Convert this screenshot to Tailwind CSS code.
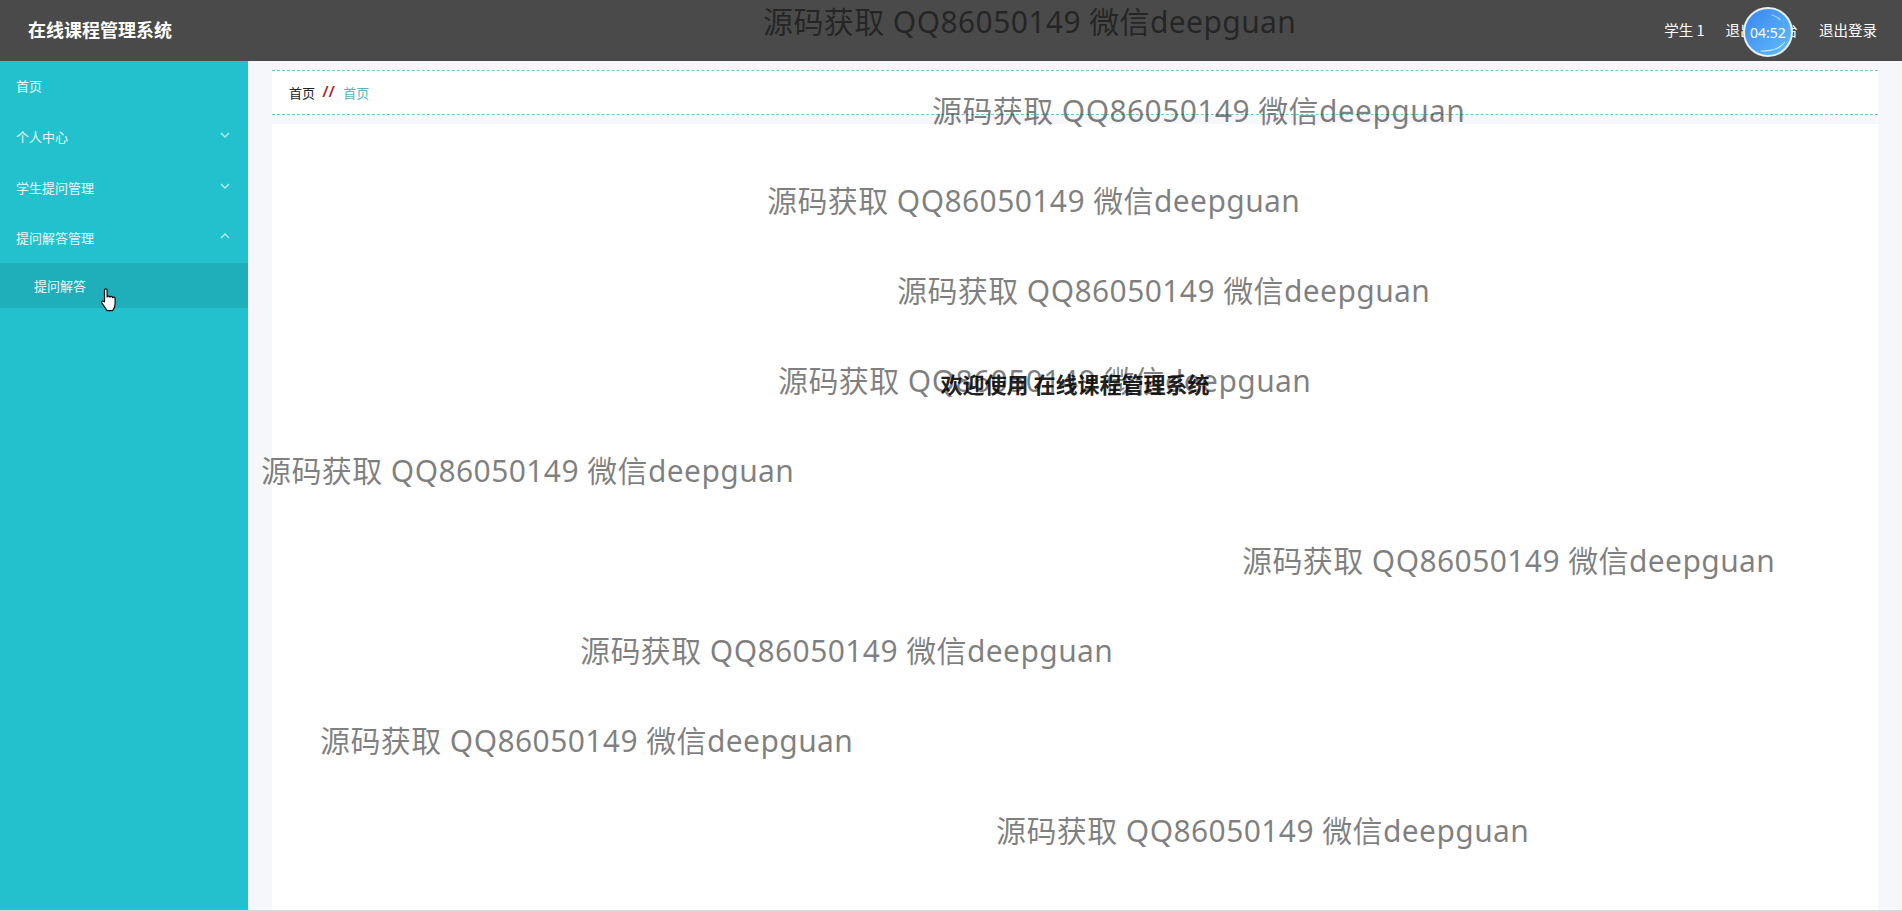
<!DOCTYPE html>
<html lang="zh-CN">
  <head>
    <meta charset="UTF-8" />
    <title>在线课程管理系统</title>
    <script src="https://cdn.jsdelivr.net/npm/@tailwindcss/browser@4"></script>
  </head>

  <body class="relative h-[912px] w-[1902px] overflow-hidden bg-[#f5f7fa] font-['Noto_Sans_CJK_SC','Noto_Sans',sans-serif]">
    <!-- top bar -->
    <header class="flex h-[61px] items-center justify-between bg-[#4a4a4a] pb-[2px] pl-[28px] pr-[25px] text-white">
      <h1 class="text-[18px] font-bold">在线课程管理系统</h1>
      <div class="flex items-center gap-[21px] text-[14.5px]">
        <span>学生 1</span>
        <span>退出到前台</span>
        <span>退出登录</span>
      </div>
    </header>

    <div class="flex h-[851px]">
      <!-- sidebar -->
      <aside class="w-[248px] shrink-0 bg-[#22c1cd] text-[13px] text-white/90">
        <div class="flex h-[50px] items-center px-4">首页</div>
        <div class="flex h-[52px] items-center justify-between px-4">
          <span>个人中心</span>
          <svg class="mb-1 mr-[1px] h-3 w-3" viewBox="0 0 12 12" fill="none" stroke="#b5f0f4" stroke-width="1.4"><path d="M2 4l4 4 4-4" /></svg>
        </div>
        <div class="flex h-[50px] items-center justify-between px-4">
          <span>学生提问管理</span>
          <svg class="mb-1 mr-[1px] h-3 w-3" viewBox="0 0 12 12" fill="none" stroke="#b5f0f4" stroke-width="1.4"><path d="M2 4l4 4 4-4" /></svg>
        </div>
        <div class="flex h-[50px] items-center justify-between px-4">
          <span>提问解答管理</span>
          <svg class="mb-1 mr-[1px] h-3 w-3" viewBox="0 0 12 12" fill="none" stroke="#b5f0f4" stroke-width="1.4"><path d="M2 8l4-4 4 4" /></svg>
        </div>
        <div class="flex h-[45px] items-center bg-[#1eafbb] pl-[34px]">提问解答</div>
      </aside>

      <!-- content -->
      <main class="flex flex-1 flex-col pl-[24px] pr-[19px] pt-[9px]">
        <nav class="flex h-[45px] items-center gap-2 border-y border-dashed border-[#7cc4ca] bg-white pl-[17px] text-[13px]">
          <span class="text-[#222]">首页</span>
          <span class="font-['Liberation_Sans',sans-serif] text-[15px] font-bold italic tracking-[2px] text-[#b0182c]">//</span>
          <span class="text-[#5ab5c0]">首页</span>
        </nav>
        <section class="mt-[9px] flex flex-1 items-start justify-center bg-white pt-[244px]">
          <h2 class="text-[22px] leading-[30px] font-bold text-[#222]">欢迎使用 在线课程管理系统</h2>
        </section>
      </main>
      <div class="w-[5px] bg-[#f6f6f6]"></div>
    </div>
    <div class="absolute bottom-0 left-0 h-[2px] w-full bg-[#d8d8d8]"></div>

    <!-- countdown bubble -->
    <div class="absolute left-[1743px] top-[7px] flex h-[50px] w-[50px] items-center justify-center overflow-hidden rounded-full border-[2px] border-[#e4f3f8] bg-gradient-to-br from-[#3a86ee] to-[#63bdfb] font-['Noto_Sans',sans-serif] text-[14px] text-white">
      <svg class="absolute inset-0 h-full w-full" viewBox="0 0 46 46" fill="none" stroke="#fff" stroke-linecap="round">
        <path d="M27 6c3 .8 5.500 2 8 4.500" stroke-opacity=".55" stroke-width="1.200" />
        <path d="M16 42c8 1 16-1 24-9-5 7-10 8-24 9z" fill="#fff" fill-opacity=".6" stroke-opacity=".5" stroke-width=".8" />
      </svg>
      <span class="relative">04:52</span>
    </div>

    <!-- watermark -->
    <div class="pointer-events-none absolute inset-0 font-['Noto_Sans','Noto_Sans_CJK_SC',sans-serif] text-[30px] leading-[40px] tracking-[0.4px] whitespace-nowrap text-black/50">
      <span class="absolute left-[763px] top-[2px]">源码获取 QQ86050149 微信deepguan</span>
      <span class="absolute left-[932px] top-[91px]">源码获取 QQ86050149 微信deepguan</span>
      <span class="absolute left-[767px] top-[181px]">源码获取 QQ86050149 微信deepguan</span>
      <span class="absolute left-[897px] top-[271px]">源码获取 QQ86050149 微信deepguan</span>
      <span class="absolute left-[778px] top-[361px]">源码获取 QQ86050149 微信deepguan</span>
      <span class="absolute left-[261px] top-[451px]">源码获取 QQ86050149 微信deepguan</span>
      <span class="absolute left-[1242px] top-[541px]">源码获取 QQ86050149 微信deepguan</span>
      <span class="absolute left-[580px] top-[631px]">源码获取 QQ86050149 微信deepguan</span>
      <span class="absolute left-[320px] top-[721px]">源码获取 QQ86050149 微信deepguan</span>
      <span class="absolute left-[996px] top-[811px]">源码获取 QQ86050149 微信deepguan</span>
    </div>

    <!-- mouse pointer -->
    <svg class="absolute left-[100px] top-[288px] h-[24px] w-[18px]" viewBox="0 0 18 24" fill="#fff" stroke="#111" stroke-width="1.2" stroke-linejoin="round">
      <path d="M4.500 2c0-1.600 2.600-1.600 2.600 0v7c.4-1.300 2.600-1.300 2.800.2.4-1.100 2.500-1 2.700.4.5-.9 2.400-.6 2.500 1v5c0 3-1.500 6-2.500 7H7c-1-1.500-2.500-4-5-7.500-1-1.500.8-2.800 2.500-1.200z" />
    </svg>
  </body>
</html>
